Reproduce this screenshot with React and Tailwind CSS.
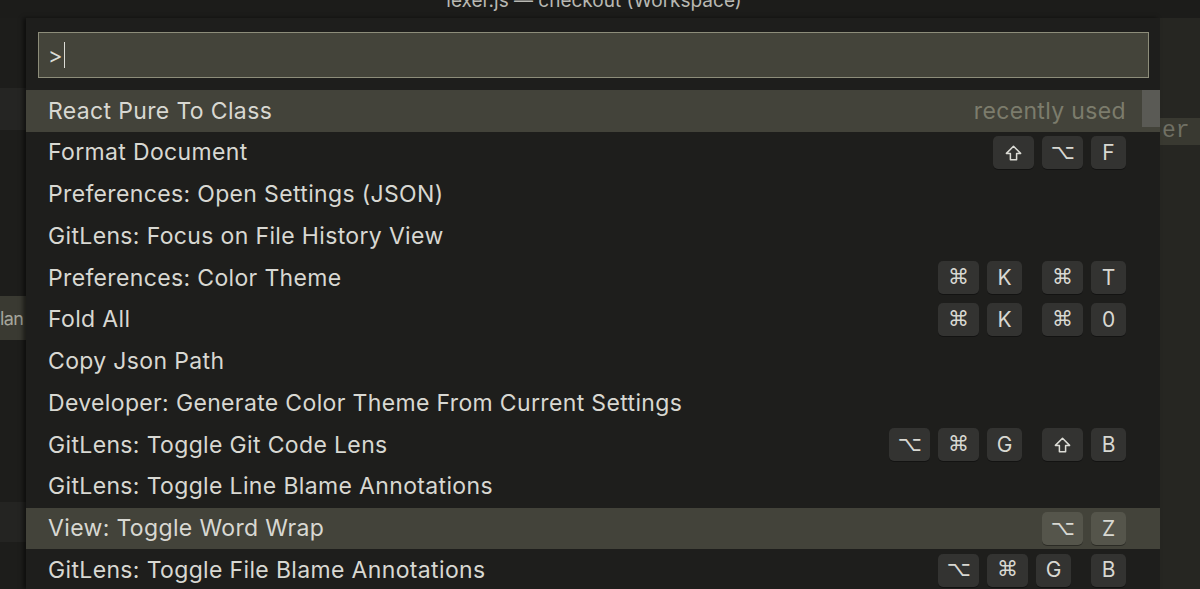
import React from 'react'

const rows = [
  { label: 'React Pure To Class', hint: 'recently used', active: true },
  { label: 'Format Document', keys: [['⇧', '⌥', 'F']] },
  { label: 'Preferences: Open Settings (JSON)' },
  { label: 'GitLens: Focus on File History View' },
  { label: 'Preferences: Color Theme', keys: [['⌘', 'K'], ['⌘', 'T']] },
  { label: 'Fold All', keys: [['⌘', 'K'], ['⌘', '0']] },
  { label: 'Copy Json Path' },
  { label: 'Developer: Generate Color Theme From Current Settings' },
  { label: 'GitLens: Toggle Git Code Lens', keys: [['⌥', '⌘', 'G'], ['⇧', 'B']] },
  { label: 'GitLens: Toggle Line Blame Annotations' },
  { label: 'View: Toggle Word Wrap', keys: [['⌥', 'Z']], active: true },
  { label: 'GitLens: Toggle File Blame Annotations', keys: [['⌥', '⌘', 'G'], ['B']] },
]

const symbols = ['⇧', '⌥', '⌘']

const ShiftIcon = () => (
  <svg width="17" height="16" viewBox="0 0 17 16" fill="none">
    <path
      d="M8.5 1.2 L15.6 8.4 H11.6 V14.8 H5.4 V8.4 H1.4 Z"
      stroke="#dcdcd6"
      strokeWidth="1.5"
      strokeLinejoin="round"
    />
  </svg>
)

const Key = ({ k, active }) => {
  const sym = symbols.includes(k)
  return (
    <span
      className={
        'flex h-[33px] items-center justify-center rounded-[5px] text-[#d8d8d2] shadow-[0_1px_0_rgba(0,0,0,0.35)] ' +
        (sym ? 'w-[41px] text-[21px] font-["DejaVu_Sans",sans-serif] ' : 'w-[35px] text-[21px] ') +
        (active ? 'bg-[#55554b]' : 'bg-[#333331]')
      }
    >
      {k === '⇧' ? <ShiftIcon /> : k}
    </span>
  )
}

const Row = ({ row }) => {
  return (
    <div
      className={
        'flex h-[41.75px] items-center justify-between pl-[22px] pr-[34px] ' +
        (row.active ? 'bg-[#43433a]' : '')
      }
    >
      <span className="text-[23px] text-[#d8d8d2] tracking-[0.35px]">{row.label}</span>
      {row.hint && <span className="text-[23px] text-[#7c7c6c] tracking-[0.35px]">{row.hint}</span>}
      {row.keys && (
        <div className="flex gap-[20px]">
          {row.keys.map((chord, i) => (
            <div key={i} className="flex gap-[8px]">
              {chord.map((k, j) => (
                <Key key={j} k={k} active={row.active} />
              ))}
            </div>
          ))}
        </div>
      )}
    </div>
  )
}

export default function App() {
  return (
    <div className='w-[1200px] h-[589px] overflow-hidden bg-[#1c1c1a] font-["Inter",sans-serif] flex flex-col'>
      {/* window title, cut off at the top */}
      <div className="h-[18px] shrink-0 flex justify-center overflow-hidden">
        <span className="-mt-[11px] pr-[12px] text-[19px] leading-[24px] text-[#b8b8b2]">
          lexer.js — checkout (Workspace)
        </span>
      </div>

      <div className="flex flex-1 min-h-0">
        {/* editor behind, left */}
        <div className="w-[26px] shrink-0 flex flex-col bg-[#1d1d1b]">
          <div className="h-[70px]" />
          <div className="h-[42px] bg-[#252523]" />
          <div className="h-[166px]" />
          <div className="h-[44px] bg-[#3a3a32] flex items-center overflow-hidden">
            <span className="text-[18px] tracking-[-0.6px] text-[#a6a69c]">lan</span>
          </div>
          <div className="h-[162px]" />
          <div className="h-[40px] bg-[#242422]" />
        </div>

        {/* command palette */}
        <div className="w-[1134px] shrink-0 relative bg-[#1e1e1c] shadow-[-3px_0_4px_rgba(0,0,0,0.5)] pt-[14px]">
          <div className="mx-[12px] mr-[11px] h-[46px] border border-[#8d8d7a] bg-[#44443a] flex items-center pl-[9px]">
            <span className="text-[22px] text-[#dcdcd6]">&gt;</span>
            <span className="ml-[1px] w-[1.5px] h-[26px] bg-[#dcdcd6]" />
          </div>
          <div className="mt-[12px] flex flex-col">
            {rows.map((row, i) => (
              <Row key={i} row={row} />
            ))}
          </div>
          <div className="absolute right-0 top-[72px] w-[18px] h-[37px] bg-[#5a5a55]" />
        </div>

        {/* editor behind, right */}
        <div className="flex-1 bg-[#262622] flex flex-col">
          <div className="h-[100px]" />
          <div className="h-[27px] bg-[#393931] flex items-center overflow-hidden">
            <span className='pl-[2px] font-["Liberation_Mono",monospace] text-[23px] text-[#707064]'>er</span>
          </div>
        </div>
      </div>
    </div>
  )
}
